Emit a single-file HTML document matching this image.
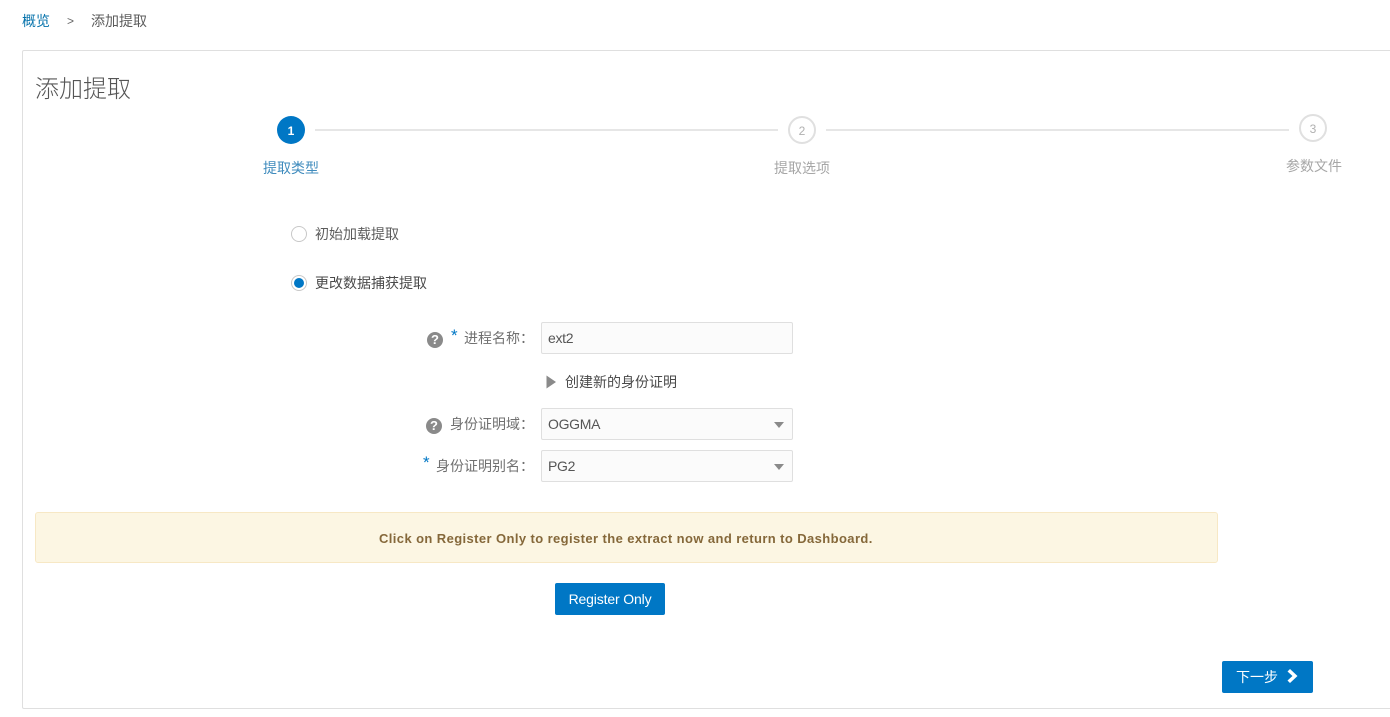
<!DOCTYPE html>
<html lang="zh">
<head>
<meta charset="utf-8">
<title>添加提取</title>
<style>
html,body{margin:0;padding:0;background:#fff;}
body{width:1390px;height:717px;overflow:hidden;position:relative;font-family:"Liberation Sans","Noto Sans CJK SC",sans-serif;font-size:14px;color:#333;}
.a{position:absolute;white-space:nowrap;}
.t{line-height:20px;height:20px;font-size:14px;}
.panel{left:22px;top:50px;width:1400px;height:659px;border:1px solid #dfdfdf;border-radius:2px;box-sizing:border-box;}
.line{height:2px;background:#e6e6e6;}
.step{width:28px;height:28px;border-radius:50%;box-sizing:border-box;border:2px solid #e0e0e0;background:#fff;color:#b0b0b0;font-size:12px;line-height:26px;text-align:center;}
.step.on{background:#0077c5;border:0;color:#fff;font-weight:bold;line-height:30px;}
.box{left:541px;width:252px;height:32px;box-sizing:border-box;border:1px solid #dfdfdf;border-radius:2px;background:#fbfbfb;font-size:14px;line-height:30px;padding-left:6px;color:#555;letter-spacing:-0.3px;}
.radio{width:16px;height:16px;border-radius:50%;box-sizing:border-box;border:1px solid #c8c8c8;background:#fff;}
.dot{width:10px;height:10px;border-radius:50%;background:#0077c5;}
.q{width:16px;height:16px;border-radius:50%;background:#8a8a8a;color:#fff;font-size:13px;font-weight:bold;line-height:16px;text-align:center;}
.star{color:#0077c5;font-size:17px;line-height:16px;}
.lab{color:#707070;}
.arr{width:0;height:0;border-left:5px solid transparent;border-right:5px solid transparent;border-top:6px solid #8a8a8a;}
.btn{background:#0077c5;color:#fff;border-radius:2px;text-align:center;}
</style>
</head>
<body>
<div class="a t" style="left:22px;top:11px;color:#0572ab;">概览</div>
<div class="a" style="left:67px;top:13px;font-size:12px;line-height:16px;color:#666;">&gt;</div>
<div class="a t" style="left:91px;top:11px;color:#5c5c5c;">添加提取</div>

<div class="a panel"></div>
<div class="a" style="left:35px;top:73px;font-size:24px;line-height:34px;color:#555;font-weight:300;">添加提取</div>

<div class="a step on" style="left:277px;top:116px;">1</div>
<div class="a line" style="left:315px;top:129px;width:463px;"></div>
<div class="a step" style="left:788px;top:116px;">2</div>
<div class="a line" style="left:826px;top:129px;width:463px;"></div>
<div class="a step" style="left:1299px;top:114px;">3</div>
<div class="a t" style="left:263px;top:158px;color:#3f8bbd;">提取类型</div>
<div class="a t" style="left:774px;top:158px;color:#a6a6a6;">提取选项</div>
<div class="a t" style="left:1286px;top:156px;color:#a6a6a6;">参数文件</div>

<div class="a radio" style="left:291px;top:226px;"></div>
<div class="a t" style="left:315px;top:224px;color:#5c5c5c;">初始加载提取</div>
<div class="a radio" style="left:291px;top:275px;"></div>
<div class="a dot" style="left:294px;top:278px;"></div>
<div class="a t" style="left:315px;top:273px;color:#4a4a4a;">更改数据捕获提取</div>

<div class="a q" style="left:427px;top:332px;">?</div>
<div class="a star" style="left:451px;top:328px;">*</div>
<div class="a t lab" style="left:464px;top:328px;">进程名称：</div>
<div class="a box" style="top:322px;">ext2</div>

<svg class="a" style="left:546px;top:375px;" width="10" height="14" viewBox="0 0 10 14"><path d="M0.500 0.500 L10 7 L0.500 13.500 Z" fill="#8a8a8a"/></svg>
<div class="a t" style="left:565px;top:372px;color:#4a4a4a;">创建新的身份证明</div>

<div class="a q" style="left:426px;top:418px;">?</div>
<div class="a t lab" style="left:450px;top:414px;">身份证明域：</div>
<div class="a box" style="top:408px;">OGGMA</div>
<div class="a arr" style="left:774px;top:422px;"></div>

<div class="a star" style="left:423px;top:455px;">*</div>
<div class="a t lab" style="left:436px;top:456px;">身份证明别名：</div>
<div class="a box" style="top:450px;">PG2</div>
<div class="a arr" style="left:774px;top:464px;"></div>

<div class="a" style="left:35px;top:512px;width:1183px;height:51px;box-sizing:border-box;background:#fcf6e3;border:1px solid #f7e8c5;border-radius:3px;"></div>
<div class="a" style="left:379px;top:530px;font-size:13px;line-height:18px;font-weight:bold;color:#85683a;letter-spacing:0.4px;">Click on Register Only to register the extract now and return to Dashboard.</div>

<div class="a btn" style="left:555px;top:583px;width:110px;height:32px;line-height:32px;font-size:14px;letter-spacing:-0.15px;">Register Only</div>

<div class="a btn" style="left:1222px;top:661px;width:91px;height:32px;"></div>
<div class="a t" style="left:1236px;top:667px;color:#fff;">下一步</div>
<svg class="a" style="left:1286px;top:667px;" width="14" height="18" viewBox="0 0 14 18"><path d="M4 2 L11.500 9 L4 16 L1.500 13.500 L6.500 9 L1.500 4.500 Z" fill="#fff"/></svg>
</body>
</html>
